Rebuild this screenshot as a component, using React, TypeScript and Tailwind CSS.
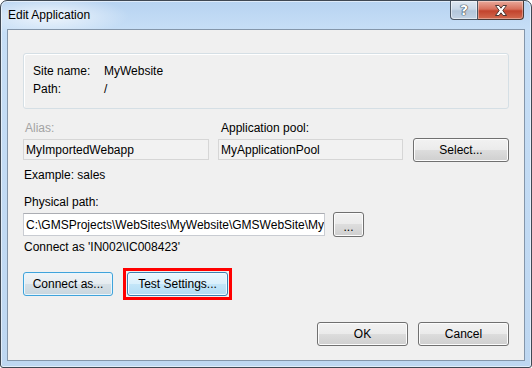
import React from 'react';

const btn =
  'flex items-center justify-center rounded-[3px] border border-[#707070] bg-[linear-gradient(#f2f2f2_0%,#ebebeb_49%,#dddddd_50%,#cfcfcf_100%)] shadow-[inset_0_0_0_1px_#fcfcfc] text-[12px] text-black leading-none';

const disabledBox =
  'flex h-[21px] items-center border border-[#d6d6d6] bg-[#f2f2f2] pl-[2px] text-[12px] text-black';

export default function App() {
  return (
    <div className="w-[532px] h-[368px] font-['Liberation_Sans',Arial,sans-serif] text-[12px] text-black">
      <div className="flex h-full flex-col rounded-t-[7px] rounded-b-[3px] border border-[#3f4853] bg-[radial-gradient(ellipse_80px_20px_at_48px_15px,rgba(255,255,255,0.75),transparent),linear-gradient(180deg,#b7d3f1_0px,#c6def6_28px,#bed7f1_100%)] shadow-[inset_0_0_0_1px_rgba(255,255,255,0.55)] px-[6px] pb-[6px]">
        {/* Barre de titre */}
        <div className="flex h-[28px] items-start justify-between">
          <span className="pl-[1px] pt-[6px] leading-[16px] text-[12px] text-black">Edit Application</span>
          <div className="flex mr-[1px]">
            <div className="flex h-[19px] w-[28px] items-center justify-center rounded-bl-[4px] border border-t-0 border-[#4b5663] bg-[linear-gradient(#dfe8f2_0%,#c9d8e8_45%,#b3c6da_55%,#c3d3e4_100%)] shadow-[inset_0_0_0_1px_rgba(255,255,255,0.5)]">
              <span className="font-['DejaVu_Sans',sans-serif] text-[14px] font-bold leading-none text-white [text-shadow:0_0_1px_#2a3440,0_0_1px_#2a3440,0_0_1px_#2a3440]">
                ?
              </span>
            </div>
            <div className="flex h-[19px] w-[46px] items-center justify-center rounded-br-[4px] border border-l-0 border-t-0 border-[#4b3a36] bg-[linear-gradient(#e9a99b_0%,#d7705c_45%,#c2432d_55%,#d26a4f_100%)] shadow-[inset_0_0_0_1px_rgba(255,255,255,0.35)]">
              <svg width="14" height="11" viewBox="0 0 14 11">
                <path
                  d="M1.5 0.5 H5 L7 3.2 L9 0.5 H12.5 L8.8 5.5 L12.5 10.5 H9 L7 7.8 L5 10.5 H1.5 L5.2 5.5 Z"
                  fill="#ffffff"
                  stroke="#3a2a28"
                  strokeWidth="0.9"
                  strokeLinejoin="round"
                />
              </svg>
            </div>
          </div>
        </div>

        {/* Zone client */}
        <div className="flex flex-1 flex-col border border-[#8496aa] bg-[#f0f0f0] px-[15px] pt-[23px] pb-[14px]">
          {/* Infos du site */}
          <div className="h-[56px] rounded-[3px] border border-[#d5dfe5] shadow-[inset_1px_1px_0_#ffffff] pl-[9px] pt-[8px]">
            <div className="flex h-[18px] items-center">
              <span className="w-[71px]">Site name:</span>
              <span>MyWebsite</span>
            </div>
            <div className="flex h-[18px] items-center">
              <span className="w-[71px]">Path:</span>
              <span>/</span>
            </div>
          </div>

          {/* Alias + pool */}
          <div className="mt-[11px] flex gap-[9px]">
            <div className="flex w-[186px] flex-col">
              <span className="h-[16px] pl-[2px] leading-[16px] text-[#a3a3a3]">Alias:</span>
              <div className={`mt-[3px] ${disabledBox}`}>MyImportedWebapp</div>
            </div>
            <div className="flex w-[185px] flex-col">
              <span className="h-[16px] pl-[3px] leading-[16px]">Application pool:</span>
              <div className={`mt-[3px] ${disabledBox}`}>MyApplicationPool</div>
            </div>
            <button className={`mt-[18px] ml-[1px] h-[24px] w-[96px] ${btn}`}>Select...</button>
          </div>

          <span className="mt-[5px] h-[16px] pl-[1px] leading-[16px]">Example: sales</span>

          <span className="mt-[11px] h-[16px] pl-[1px] leading-[16px]">Physical path:</span>
          <div className="mt-[2px] flex items-center gap-[8px]">
            <div className="flex h-[23px] w-[302px] items-center overflow-hidden whitespace-nowrap border border-[#c9ccd2] border-t-[#abadb3] bg-white pl-[2px]">
              C:\GMSProjects\WebSites\MyWebsite\GMSWebSite\MyI
            </div>
            <button className={`h-[25px] w-[31px] pt-[5px] ${btn}`}>...</button>
          </div>

          <span className="mt-[2px] h-[16px] pl-[1px] leading-[16px]">Connect as 'IN002\IC008423'</span>

          <div className="mt-[13px] flex items-center gap-[10px]">
            <button className="flex h-[24px] w-[90px] items-center justify-center rounded-[3px] border border-[#3fa3db] bg-[linear-gradient(#f0f4f7_0%,#e6ecf0_49%,#d6e0e6_50%,#c9d6de_100%)] shadow-[inset_0_0_0_1px_#e8f6fd] text-[12px] leading-none">
              Connect as...
            </button>
            <div className="border-[3px] border-[#ff0000] p-[1px]">
              <button className="flex h-[24px] w-[101px] items-center justify-center rounded-[3px] border border-[#3c7fb1] bg-[linear-gradient(#eaf6fd_0%,#d9f0fc_49%,#c4e6f9_50%,#b2dcf4_100%)] shadow-[inset_0_0_0_1px_#f2fafe] text-[12px] leading-none">
                Test Settings...
              </button>
            </div>
          </div>

          <div className="mt-auto flex justify-end gap-[10px]">
            <button className={`h-[24px] w-[91px] ${btn}`}>OK</button>
            <button className={`h-[24px] w-[91px] ${btn}`}>Cancel</button>
          </div>
        </div>
      </div>
    </div>
  );
}
